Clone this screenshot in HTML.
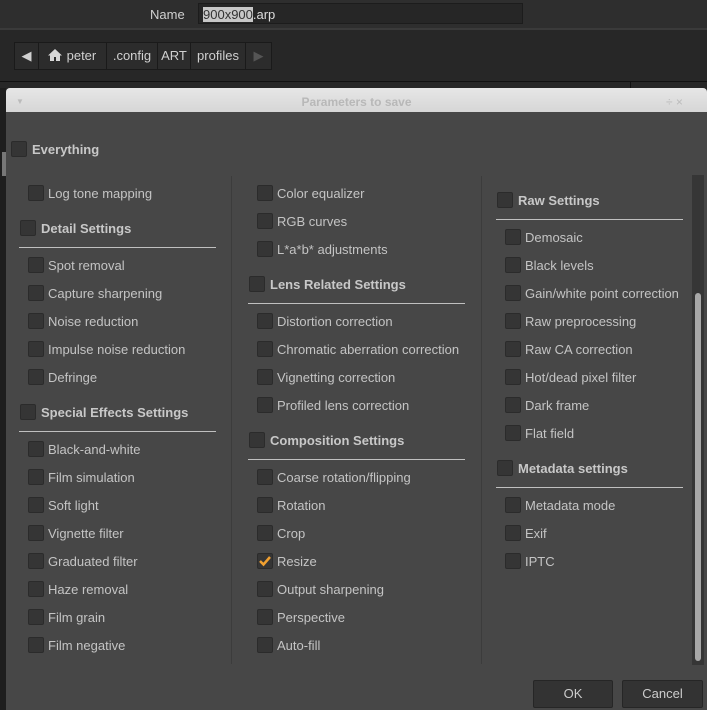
<!DOCTYPE html>
<html><head><meta charset="utf-8"><style>
*{margin:0;padding:0;box-sizing:border-box}
body{width:707px;height:710px;overflow:hidden;background:#272727;font-family:"Liberation Sans",sans-serif;font-size:13px;color:#c8c8c8;position:relative}
.a{position:absolute}
.cb{position:absolute;width:16px;height:16px;background:#353535;border:1px solid #2b2b2b;border-radius:2px}
.t{position:absolute;white-space:nowrap;line-height:16px;font-size:13px;color:#c4c4c4;margin-top:1px}
.h{font-weight:bold;color:#c8c8c8}
.ln{position:absolute;height:1px;background:#c0c0c0}
.seg{position:absolute;top:42px;height:28px;background:#2c2c2c;border:1px solid #1a1a1a;color:#d0d0d0;line-height:26px;text-align:center;font-size:13px}
</style></head><body>
<div class="a" style="left:0;top:0;width:707px;height:30px;background:#2e2e2e;border-bottom:2px solid #3a3a3a"></div>
<div class="t" style="left:150px;top:6px;color:#d0d0d0">Name</div>
<div class="a" style="left:198px;top:3px;width:325px;height:21px;background:#262626;border:1px solid #1c1c1c"></div>
<div class="t" style="left:203px;top:6px;color:#ddd"><span style="background:#c8c8c8;color:#333">900x900</span>.arp</div>
<div class="seg" style="left:14px;width:25px">&#9664;</div>
<div class="seg" style="left:38px;width:69px;text-align:left;padding-left:8px"><svg width="16" height="14" viewBox="0 0 16 14" style="vertical-align:-2px"><path d="M8 1 L1 7.5 H3 V13 H7 V9 H9 V13 H13 V7.5 H15 Z" fill="#d8d8d8"/></svg> peter</div>
<div class="seg" style="left:106px;width:52px">.config</div>
<div class="seg" style="left:157px;width:34px">ART</div>
<div class="seg" style="left:190px;width:56px">profiles</div>
<div class="seg" style="left:245px;width:27px;color:#555">&#9654;</div>
<div class="a" style="left:0;top:81px;width:707px;height:1px;background:#111"></div>
<div class="a" style="left:630px;top:81px;width:1px;height:10px;background:#111"></div>
<div class="a" style="left:0;top:88px;width:6px;height:622px;background:#1e1e1e"></div>
<div class="a" style="left:2px;top:152px;width:4px;height:24px;background:#777"></div>
<div class="a" style="left:6px;top:88px;width:701px;height:622px;background:#474747;border-radius:4px 4px 0 0"></div>
<div class="a" style="left:6px;top:88px;width:701px;height:24px;background:linear-gradient(#e6e6e6,#d6d6d6);border-radius:4px 4px 0 0"></div>
<div class="t" style="left:6px;width:701px;text-align:center;top:93px;color:#b8b8b8;font-weight:bold;font-size:12px">Parameters to save</div>
<div class="t" style="left:16px;top:93px;color:#bbb;font-size:8px">&#9660;</div>
<div class="t" style="left:666px;top:93px;color:#bbb;font-size:12px">&#247; &#215;</div>
<div class="cb" style="left:11px;top:141px"></div><div class="t h" style="left:32px;top:141px">Everything</div>
<div class="a" style="left:231px;top:176px;width:1px;height:488px;background:#3c3c3c"></div>
<div class="a" style="left:481px;top:176px;width:1px;height:488px;background:#3c3c3c"></div>
<div class="a" style="left:692px;top:175px;width:12px;height:490px;background:#363636"></div>
<div class="a" style="left:695px;top:293px;width:6px;height:368px;background:#a8a8a8;border-radius:3px"></div>
<div class="cb" style="left:28px;top:185px"></div><div class="t" style="left:48px;top:185px">Log tone mapping</div>
<div class="cb" style="left:20px;top:220px"></div><div class="t h" style="left:41px;top:220px">Detail Settings</div>
<div class="ln" style="left:19px;top:247px;width:197px"></div>
<div class="cb" style="left:28px;top:257px"></div><div class="t" style="left:48px;top:257px">Spot removal</div>
<div class="cb" style="left:28px;top:285px"></div><div class="t" style="left:48px;top:285px">Capture sharpening</div>
<div class="cb" style="left:28px;top:313px"></div><div class="t" style="left:48px;top:313px">Noise reduction</div>
<div class="cb" style="left:28px;top:341px"></div><div class="t" style="left:48px;top:341px">Impulse noise reduction</div>
<div class="cb" style="left:28px;top:369px"></div><div class="t" style="left:48px;top:369px">Defringe</div>
<div class="cb" style="left:20px;top:404px"></div><div class="t h" style="left:41px;top:404px">Special Effects Settings</div>
<div class="ln" style="left:19px;top:431px;width:197px"></div>
<div class="cb" style="left:28px;top:441px"></div><div class="t" style="left:48px;top:441px">Black-and-white</div>
<div class="cb" style="left:28px;top:469px"></div><div class="t" style="left:48px;top:469px">Film simulation</div>
<div class="cb" style="left:28px;top:497px"></div><div class="t" style="left:48px;top:497px">Soft light</div>
<div class="cb" style="left:28px;top:525px"></div><div class="t" style="left:48px;top:525px">Vignette filter</div>
<div class="cb" style="left:28px;top:553px"></div><div class="t" style="left:48px;top:553px">Graduated filter</div>
<div class="cb" style="left:28px;top:581px"></div><div class="t" style="left:48px;top:581px">Haze removal</div>
<div class="cb" style="left:28px;top:609px"></div><div class="t" style="left:48px;top:609px">Film grain</div>
<div class="cb" style="left:28px;top:637px"></div><div class="t" style="left:48px;top:637px">Film negative</div>
<div class="cb" style="left:257px;top:185px"></div><div class="t" style="left:277px;top:185px">Color equalizer</div>
<div class="cb" style="left:257px;top:213px"></div><div class="t" style="left:277px;top:213px">RGB curves</div>
<div class="cb" style="left:257px;top:241px"></div><div class="t" style="left:277px;top:241px">L*a*b* adjustments</div>
<div class="cb" style="left:249px;top:276px"></div><div class="t h" style="left:270px;top:276px">Lens Related Settings</div>
<div class="ln" style="left:248px;top:303px;width:217px"></div>
<div class="cb" style="left:257px;top:313px"></div><div class="t" style="left:277px;top:313px">Distortion correction</div>
<div class="cb" style="left:257px;top:341px"></div><div class="t" style="left:277px;top:341px">Chromatic aberration correction</div>
<div class="cb" style="left:257px;top:369px"></div><div class="t" style="left:277px;top:369px">Vignetting correction</div>
<div class="cb" style="left:257px;top:397px"></div><div class="t" style="left:277px;top:397px">Profiled lens correction</div>
<div class="cb" style="left:249px;top:432px"></div><div class="t h" style="left:270px;top:432px">Composition Settings</div>
<div class="ln" style="left:248px;top:459px;width:217px"></div>
<div class="cb" style="left:257px;top:469px"></div><div class="t" style="left:277px;top:469px">Coarse rotation/flipping</div>
<div class="cb" style="left:257px;top:497px"></div><div class="t" style="left:277px;top:497px">Rotation</div>
<div class="cb" style="left:257px;top:525px"></div><div class="t" style="left:277px;top:525px">Crop</div>
<div class="cb" style="left:257px;top:553px"><svg width="14" height="14" viewBox="0 0 14 14" style="position:absolute;left:0;top:0"><path d="M2 7 L5.5 10.5 L12 3" stroke="#f0a030" stroke-width="2.5" fill="none"/></svg></div><div class="t" style="left:277px;top:553px">Resize</div>
<div class="cb" style="left:257px;top:581px"></div><div class="t" style="left:277px;top:581px">Output sharpening</div>
<div class="cb" style="left:257px;top:609px"></div><div class="t" style="left:277px;top:609px">Perspective</div>
<div class="cb" style="left:257px;top:637px"></div><div class="t" style="left:277px;top:637px">Auto-fill</div>
<div class="cb" style="left:497px;top:192px"></div><div class="t h" style="left:518px;top:192px">Raw Settings</div>
<div class="ln" style="left:496px;top:219px;width:187px"></div>
<div class="cb" style="left:505px;top:229px"></div><div class="t" style="left:525px;top:229px">Demosaic</div>
<div class="cb" style="left:505px;top:257px"></div><div class="t" style="left:525px;top:257px">Black levels</div>
<div class="cb" style="left:505px;top:285px"></div><div class="t" style="left:525px;top:285px">Gain/white point correction</div>
<div class="cb" style="left:505px;top:313px"></div><div class="t" style="left:525px;top:313px">Raw preprocessing</div>
<div class="cb" style="left:505px;top:341px"></div><div class="t" style="left:525px;top:341px">Raw CA correction</div>
<div class="cb" style="left:505px;top:369px"></div><div class="t" style="left:525px;top:369px">Hot/dead pixel filter</div>
<div class="cb" style="left:505px;top:397px"></div><div class="t" style="left:525px;top:397px">Dark frame</div>
<div class="cb" style="left:505px;top:425px"></div><div class="t" style="left:525px;top:425px">Flat field</div>
<div class="cb" style="left:497px;top:460px"></div><div class="t h" style="left:518px;top:460px">Metadata settings</div>
<div class="ln" style="left:496px;top:487px;width:187px"></div>
<div class="cb" style="left:505px;top:497px"></div><div class="t" style="left:525px;top:497px">Metadata mode</div>
<div class="cb" style="left:505px;top:525px"></div><div class="t" style="left:525px;top:525px">Exif</div>
<div class="cb" style="left:505px;top:553px"></div><div class="t" style="left:525px;top:553px">IPTC</div>
<div class="a" style="left:533px;top:680px;width:80px;height:28px;background:#333;border:1px solid #262626;border-radius:2px;text-align:center;line-height:26px;color:#ccc">OK</div>
<div class="a" style="left:622px;top:680px;width:81px;height:28px;background:#333;border:1px solid #262626;border-radius:2px;text-align:center;line-height:26px;color:#ccc">Cancel</div>
</body></html>
